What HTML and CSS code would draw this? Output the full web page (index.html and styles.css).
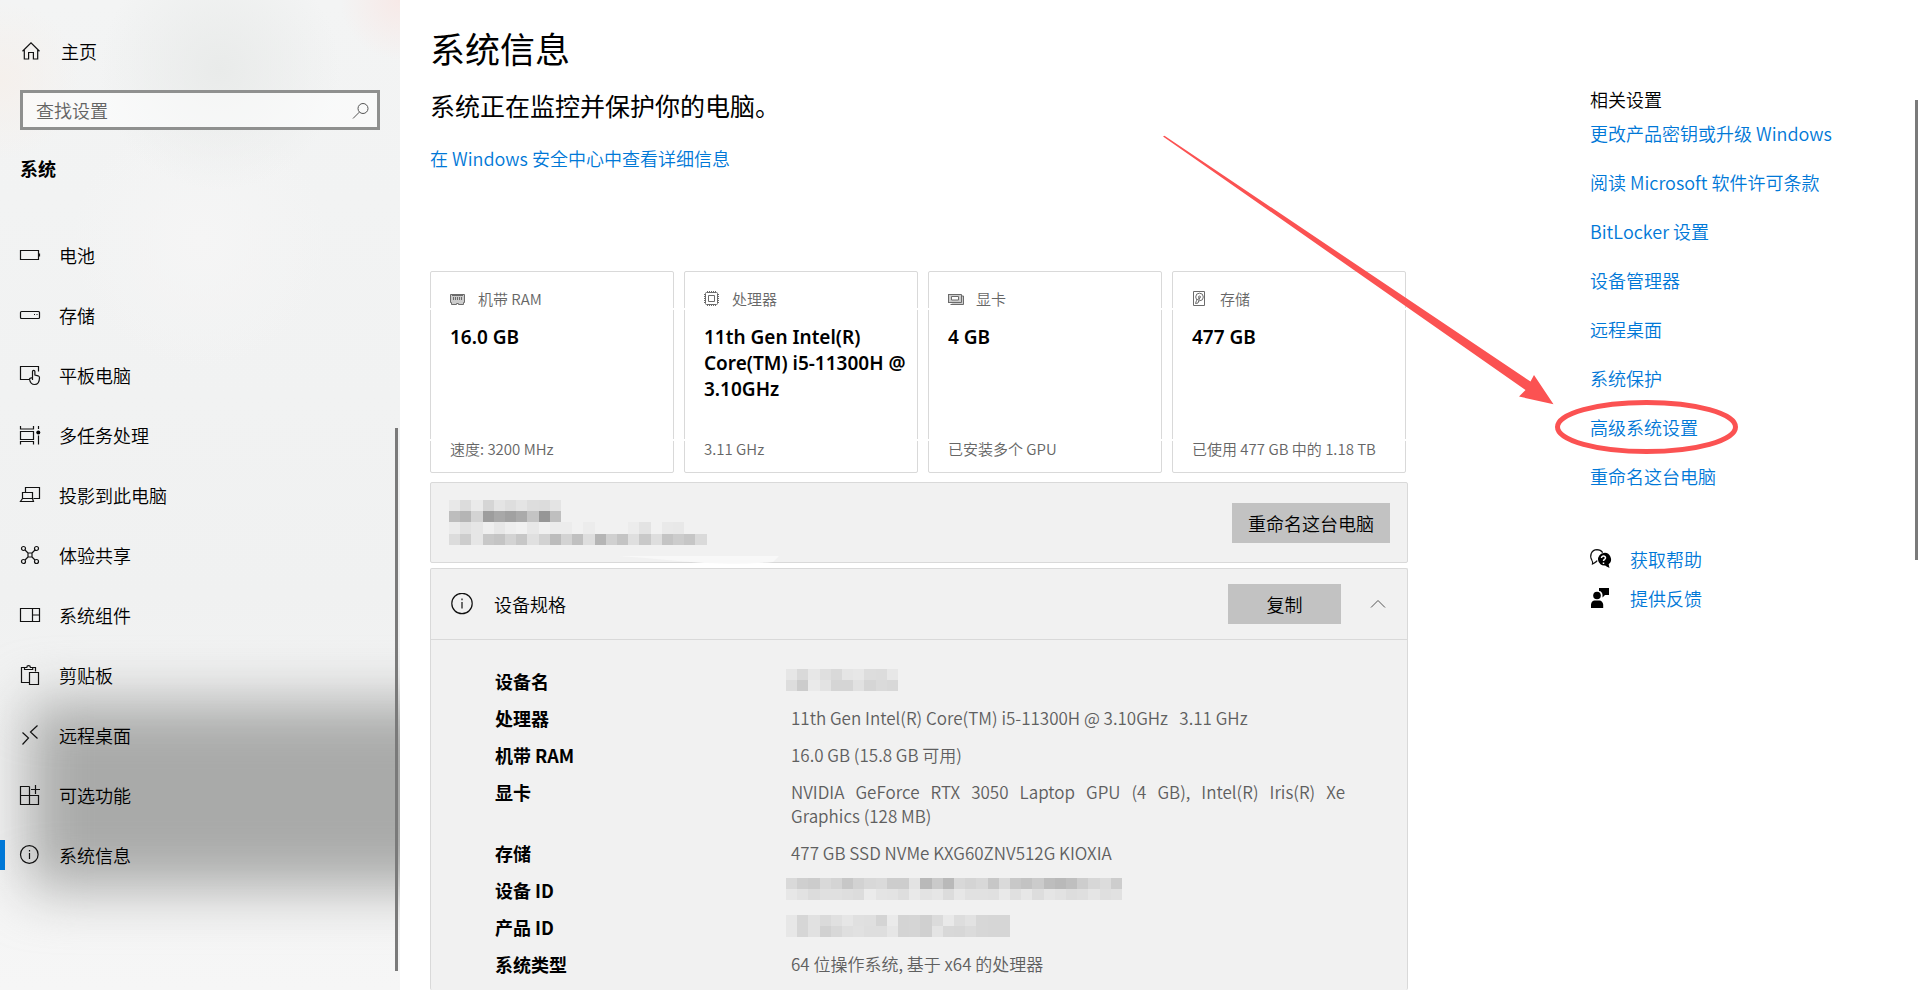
FILE: index.html
```html
<!DOCTYPE html>
<html lang="zh-CN">
<head>
<meta charset="utf-8">
<title>系统信息</title>
<link rel="stylesheet" href="styles.css">
</head>
<body>
<div class="window">
  <div class="sidebar">
    <a class="home" href="#">
      <svg class="icon" viewBox="0 0 20 20"><path d="M1.500 10.200 10 1.800l8.500 8.400M3.300 8.800v9.200h4.300v-6.500h4.800V18h4.300V8.800"/></svg>
      <span>主页</span>
    </a>
    <label class="search">
      <input type="text" placeholder="查找设置" aria-label="查找设置">
      <svg class="search-icon" viewBox="0 0 18 18"><circle cx="11" cy="6.500" r="5"/><path d="M7.400 10.100 1 16.500"/></svg>
    </label>
    <h2 class="section">系统</h2>
    <nav class="nav">
      <a href="#"><svg class="icon" viewBox="0 0 20 20"><path d="M.5 5.500h18v9H.5zM19.500 8.500v3"/></svg><span>电池</span></a>
      <a href="#"><svg class="icon" viewBox="0 0 20 20"><rect x=".5" y="6.500" width="19" height="7" rx="1"/><path d="M14 9.500h1M16.500 9.500h1"/></svg><span>存储</span></a>
      <a href="#"><svg class="icon" viewBox="0 0 20 20"><path d="M9 14.500H.5v-13h18v5"/><path d="M12.500 15V6.500a1.200 1.200 0 0 1 2.400 0V10l3.200.8c1 .3 1.400.9 1.400 1.900-.1 4.500-1.500 6.800-4.800 6.800-3 0-4.700-2-5.200-5.500.3-1.200 1.800-1.200 3-1z"/></svg><span>平板电脑</span></a>
      <a href="#"><svg class="icon" viewBox="0 0 20 20"><path d="M.5 1v3h13V1M.5 6.500h13v8H.5zM.5 19.500v-3h13v3M18.500 1v3M18.500 10.500v9"/><circle class="solid" cx="18.300" cy="7.500" r="2"/></svg><span>多任务处理</span></a>
      <a href="#"><svg class="icon" viewBox="0 0 20 20"><path d="M5.500 7V2.500h14v11h-6M2.500 14V7.500h10V14M2.500 13.500h10l1 3H.5z"/></svg><span>投影到此电脑</span></a>
      <a href="#"><svg class="icon" viewBox="0 0 20 20"><circle cx="3.500" cy="3.500" r="2"/><circle cx="16.500" cy="3.500" r="2"/><circle cx="3.500" cy="16.500" r="2"/><circle cx="16.500" cy="16.500" r="2"/><path d="M8 8h4v4H8zM5 5l3 3M15 5l-3 3M5 15l3-3M15 15l-3-3"/></svg><span>体验共享</span></a>
      <a href="#"><svg class="icon" viewBox="0 0 20 20"><path d="M.5 3.500h19v13H.5zM12.500 3.500v13M12.500 10h7"/></svg><span>系统组件</span></a>
      <a href="#"><svg class="icon" viewBox="0 0 20 20"><path d="M9 17.500H1.500v-15h3M12.500 2.500h3v4M4.500 4.500v-2h2.300a1.800 1.800 0 0 1 3.600 0h2.300v2zM9.500 7.500h9v12h-9z"/></svg><span>剪贴板</span></a>
      <a href="#"><svg class="icon" viewBox="0 0 20 20"><path d="M2.500 7.500 8.500 13l-6 6.500M17.500.5l-7 6.500 7 6.500"/></svg><span>远程桌面</span></a>
      <a href="#"><svg class="icon" viewBox="0 0 20 20"><path d="M9.500 1.500h-9v18h18v-9H.5M9.500 1.500v18M15.500 0v9M11 4.500h9"/></svg><span>可选功能</span></a>
      <a class="current" href="#"><svg class="icon" viewBox="0 0 20 20"><circle cx="9.300" cy="9.500" r="8.800"/><path d="M9.500 8v6M9.500 5v1.500"/></svg><span>系统信息</span></a>
    </nav>
    <div class="thumb side-thumb"></div>
  </div>

  <main class="content">
    <h1>系统信息</h1>
    <p class="status">系统正在监控并保护你的电脑。</p>
    <a class="security" href="#">在 Windows 安全中心中查看详细信息</a>

    <div class="cards">
      <section class="card">
        <div class="card-title"><svg class="mini" viewBox="0 0 16 16"><path d="M.5 3.500h14v8h-1v2H8.500v-1h-2v1h-5v-2h-1z" fill="#ccc"/><path d="M3.500 6v3M5.500 6v3M7.500 6v3M9.500 6v3M11.500 6v3M2 4.500h11"/></svg><span>机带 RAM</span></div>
        <p class="card-value">16.0 GB</p>
        <p class="card-note">速度: 3200 MHz</p>
      </section>
      <section class="card">
        <div class="card-title"><svg class="mini" viewBox="0 0 16 16"><rect x="1.500" y="1.500" width="12" height="12" rx="1"/><path d="M4.500 4.500h6v6h-6z"/><path stroke-dasharray="1 1" d="M3 .5h10M3 14.500h10M.5 3v10M14.500 3v10"/></svg><span>处理器</span></div>
        <p class="card-value">11th Gen Intel(R) Core(TM) i5-11300H @ 3.10GHz</p>
        <p class="card-note">3.11 GHz</p>
      </section>
      <section class="card">
        <div class="card-title"><svg class="mini" viewBox="0 0 16 16"><path d="M2.500 13.500h13V5h-2" fill="#ccc"/><path d="M.5 3v9M.5 3.500h13v8H.5z" fill="#ccc"/><path d="M3.500 5.500h7v3.500h-7z" fill="#fff"/></svg><span>显卡</span></div>
        <p class="card-value">4 GB</p>
        <p class="card-note">已安装多个 GPU</p>
      </section>
      <section class="card">
        <div class="card-title"><svg class="mini" viewBox="0 0 16 16"><path d="M1.500.5h11v14h-11z"/><circle cx="7.500" cy="6" r="3.800"/><circle cx="7.500" cy="6" r="1"/><path d="M7.500 7 4.500 9.500 3.500 12.500 6 12l1-3z" fill="#fff"/></svg><span>存储</span></div>
        <p class="card-value">477 GB</p>
        <p class="card-note">已使用 477 GB 中的 1.18 TB</p>
      </section>
    </div>

    <section class="panel device">
      <svg class="mosaic" data-rows="e8dcead5e4dee4dddce4 bdb5d39da8a1aac496bf ebe1e6efe7eef1e8f0ececf1ecf1f1f1ece3f1e9e8 dccde6c8c4d3c7e0d2bcd3c0deb5d0c4dfc9dec4ccc6da"></svg>
      <button class="button" type="button">重命名这台电脑</button>
      <svg class="smudge" viewBox="0 0 160 10"><path d="M0 1h160l-6 6q-45 4-95-1Q30 3 0 1z"/></svg>
    </section>

    <section class="panel specs">
      <header class="specs-head">
        <svg class="info" viewBox="0 0 22 22"><circle cx="11" cy="10.500" r="10.200"/><path d="M11 9v6.500M11 5.500v1.800"/></svg>
        <h3>设备规格</h3>
        <button class="button copy" type="button">复制</button>
        <button class="collapse" type="button" aria-label="折叠"><svg viewBox="0 0 16 10"><path d="M1 8.500 8 1.500l7 7"/></svg></button>
      </header>
      <table class="spec-table">
        <tr><th scope="row">设备名</th><td class="masked"><svg class="mosaic" data-rows="e6d9e7dfd9e5e7dddce7 ddcceae3d5d5e1d5dad8"></svg></td></tr>
        <tr><th scope="row">处理器</th><td>11th Gen Intel(R) Core(TM) i5-11300H @ 3.10GHz &nbsp; 3.11 GHz</td></tr>
        <tr><th scope="row">机带 RAM</th><td>16.0 GB (15.8 GB 可用)</td></tr>
        <tr><th scope="row">显卡</th><td>NVIDIA GeForce RTX 3050 Laptop GPU (4 GB), Intel(R) Iris(R) Xe Graphics (128 MB)</td></tr>
        <tr><th scope="row">存储</th><td>477 GB SSD NVMe KXG60ZNV512G KIOXIA</td></tr>
        <tr><th scope="row">设备 ID</th><td class="masked"><svg class="mosaic" data-rows="d9cfccd9d4c7d2d8dacdcde3b9cab9d8d4d8c7dac8c3cbbdb9bfcdd7dccd e7e2dce0e0dedcebe4e3dee9e3e6dce7e1e1e0e9e0e7dde5e2dddfe5dfe1"></svg></td></tr>
        <tr><th scope="row">产品 ID</th><td class="masked"><svg class="mosaic" data-rows="e7d6e1dae0e6e0dfd4ead4d5d0dbe9dde2d7d6d6 e7d6e1d1d8dfe1dedee6d4d5d0e4d8d7dbd7d6d6"></svg></td></tr>
        <tr><th scope="row">系统类型</th><td>64 位操作系统, 基于 x64 的处理器</td></tr>
      </table>
    </section>
  </main>

  <aside class="related">
    <h3>相关设置</h3>
    <ul class="links">
      <li><a href="#">更改产品密钥或升级 Windows</a></li>
      <li><a href="#">阅读 Microsoft 软件许可条款</a></li>
      <li><a href="#">BitLocker 设置</a></li>
      <li><a href="#">设备管理器</a></li>
      <li><a href="#">远程桌面</a></li>
      <li><a href="#">系统保护</a></li>
      <li><a href="#">高级系统设置</a></li>
      <li><a href="#">重命名这台电脑</a></li>
    </ul>
    <ul class="help">
      <li><svg class="icon" viewBox="0 0 20 20"><path d="M7 11.500c-.2.800-1.500 2-4.500 3.500.3-1.500.2-2.500-.5-3.500C-1 6.500 1.500.8 7 .6c2.500 0 4.500 1.200 5.700 3"/><path class="solid" d="M13.500 4a6.300 6.300 0 1 0 1.600 12.500c1 .8 2.500 1.500 4.400 2.500-.4-1.300-.4-2.300-.9-3.700A6.400 6.400 0 0 0 13.500 4z"/><path class="cut" d="M11.500 9c0-2.800 4.200-2.400 4 0-.2 1.500-2 1.300-2 3M13.500 13.500V15"/></svg><a href="#">获取帮助</a></li>
      <li><svg class="icon" viewBox="0 0 20 20"><path class="solid" d="M9 0h10v7h-4l-2.500 2.500V7C12.500 5 11 3 9 3zM1 20v-3.500c.3-2.500 2-4 3.500-4h5c1.800 0 3.500 1.800 3.700 4V20z"/><circle class="solid" cx="7" cy="7.500" r="3.800"/></svg><a href="#">提供反馈</a></li>
    </ul>
  </aside>

  <div class="thumb main-thumb"></div>
  <svg class="annotation" viewBox="1160 130 590 330">
    <path d="M1163 136.500 1164.500 135.800 1530.500 381.500 1534 375 1553.500 404.300 1519 396.500 1525.500 390z"/>
    <ellipse cx="1646.500" cy="427" rx="89" ry="24.500"/>
  </svg>
</div>
<script src="mosaic.js"></script>
</body>
</html>
```
FILE: mosaic.js
```js
// Draws each censored value as a grid of grey cells, two hex digits per cell.
const CELL = 56 / 5;
document.querySelectorAll(".mosaic").forEach(svg => {
  const rows = svg.dataset.rows.split(" ");
  const columns = Math.max(...rows.map(row => row.length / 2));
  svg.setAttribute("width", Math.round(columns * CELL));
  svg.setAttribute("height", Math.round(rows.length * CELL));
  svg.setAttribute("shape-rendering", "crispEdges");
  rows.forEach((row, y) => {
    row.match(/../g).forEach((grey, x) => {
      const rect = document.createElementNS("http://www.w3.org/2000/svg", "rect");
      rect.setAttribute("x", x * CELL);
      rect.setAttribute("y", y * CELL);
      rect.setAttribute("width", CELL);
      rect.setAttribute("height", CELL);
      rect.setAttribute("fill", "#" + grey.repeat(3));
      svg.append(rect);
    });
  });
});
```
FILE: styles.css
```css
* { box-sizing: border-box; margin: 0; padding: 0; }

body {
  font: 350 18px/24px "Noto Sans CJK SC", sans-serif;
  color: #000;
  background: #fff;
}

a { color: #0078d7; text-decoration: none; }
ul { list-style: none; }
button { font: inherit; border: 0; }

svg { fill: none; stroke: #111; stroke-width: 1; flex: none; display: block; }
.solid { fill: #000; stroke: none; }
.cut { stroke: #fff; stroke-width: 1.5; }
.icon { width: 20px; height: 20px; stroke-width: 1.2; overflow: visible; }

.window {
  position: relative;
  display: grid;
  grid-template-columns: 400px minmax(0, 1fr) 330px;
  min-height: 100vh;
}

/* Sidebar */
.sidebar {
  position: relative;
  z-index: 0;
  overflow: hidden;
  padding: 31px 20px 0;
  background:
    radial-gradient(circle at 400px 0, #f7e9e7, transparent 60px),
    radial-gradient(circle at 0 80px, #f5f0ec, transparent 80px),
    radial-gradient(circle at 220px 70px, #e9ebea, transparent 120px),
    radial-gradient(circle at 200px 240px, #f5f5f5, transparent 130px),
    linear-gradient(#f3f4f4, #f0f1f1 60%, #f6f6f6);
}
.sidebar::before {
  content: "";
  position: absolute;
  z-index: -1;
  top: 702px;
  left: 28px;
  right: -100px;
  height: 186px;
  background: #a9aaa9;
  filter: blur(28px);
}
.home { display: flex; align-items: center; gap: 20px; height: 40px; padding-left: 1px; color: #000; }
.search { position: relative; display: block; margin-top: 19px; }
.search input {
  width: 100%;
  height: 40px;
  padding: 0 40px 1px 13px;
  font: inherit;
  border: 3px solid #8f908f;
  background: rgba(255, 255, 255, .5);
}
.search input::placeholder { color: #636363; opacity: 1; }
.search-icon { position: absolute; right: 10px; top: 12px; width: 18px; height: 18px; stroke: #555; }
.section { margin-top: 26px; font-size: 18px; font-weight: 700; }
.nav { margin: 45px -20px 0; }
.nav a { display: flex; align-items: center; gap: 19px; height: 60px; padding-left: 20px; color: #000; }
.nav .current { background: linear-gradient(#0078d7, #0078d7) 0 15px / 5px 30px no-repeat; }

.thumb { position: absolute; width: 3px; background: #7a7a7a; }
.side-thumb { top: 428px; right: 2px; height: 543px; }
.main-thumb { top: 100px; right: 2px; height: 460px; }

/* Content */
.content { display: flex; flex-direction: column; padding: 22px 182px 0 30px; }
h1 { font-size: 35px; line-height: 52px; font-weight: 400; }
.status { margin-top: 13px; font-size: 25px; line-height: 36px; font-weight: 400; }
.security { margin-top: 23px; }

.cards {
  display: grid;
  grid-template-columns: 244fr 234fr 234fr 234fr;
  gap: 10px;
  margin: 101px 2px 0 0;
}
.card {
  position: relative;
  display: flex;
  flex-direction: column;
  min-height: 202px;
  padding: 15px 8px 11px 19px;
  border: 1px solid #d9d9d9;
  border-radius: 2px;
}
.card::before {
  content: "";
  position: absolute;
  inset: 36px -1px 31px;
  border: solid #fff;
  border-width: 2px 0;
}
.card-title { display: flex; align-items: center; gap: 12px; color: #666; font-size: 15px; }
.mini { width: 16px; height: 16px; stroke: #6b6b6b; }
.card-value { margin-top: 13px; font: 600 19px/26px "Noto Sans", sans-serif; }
.card-note { margin-top: auto; color: #666; font-size: 15px; }

.panel { border: 1px solid #d9d9d9; border-radius: 2px; background: #f1f1f1; }
.device {
  position: relative;
  display: flex;
  justify-content: space-between;
  align-items: center;
  min-height: 81px;
  margin-top: 9px;
  padding: 0 17px 0 18px;
}
.smudge { position: absolute; left: 188px; bottom: -3px; width: 160px; height: 10px; fill: #f8f8f8; stroke: none; }
.mosaic { stroke: none; }
.button { height: 40px; padding: 0 16px; background: #c2c2c2; color: #000; }

.specs { flex: 1; margin-top: 5px; border-bottom: 0; }
.specs-head { display: flex; align-items: center; height: 71px; padding: 0 21px 0 20px; border-bottom: 1px solid #d9d9d9; }
.info { width: 22px; height: 22px; stroke-width: 1.2; }
.specs-head h3 { margin-left: 21px; font-size: 18px; font-weight: 350; }
.copy { width: 113px; margin-left: auto; }
.collapse { margin-left: 29px; background: none; }
.collapse svg { width: 16px; height: 10px; stroke: #555; }

.spec-table { width: 850px; max-width: 100%; margin: 29px 0 0 64px; border-collapse: collapse; table-layout: fixed; }
.spec-table th { width: 286px; text-align: left; font-weight: 700; vertical-align: top; padding-bottom: 13px; }
.spec-table td { padding: 0 0 13px 10px; vertical-align: top; text-align: justify; font-size: 17px; color: #5f5f5f; }
.spec-table .masked { padding-left: 5px; }

/* Related links */
.related { padding-top: 87px; }
.related h3 { font-size: 18px; font-weight: 350; }
.links { display: grid; gap: 25px; margin-top: 10px; }
.help { display: grid; gap: 15px; margin-top: 59px; }
.help li { display: flex; align-items: center; gap: 20px; }

.annotation { position: absolute; top: 130px; right: 170px; width: 590px; height: 330px; pointer-events: none; }
.annotation path { fill: #fb5252; stroke: none; }
.annotation ellipse { stroke: #fb5252; stroke-width: 5; }
```
